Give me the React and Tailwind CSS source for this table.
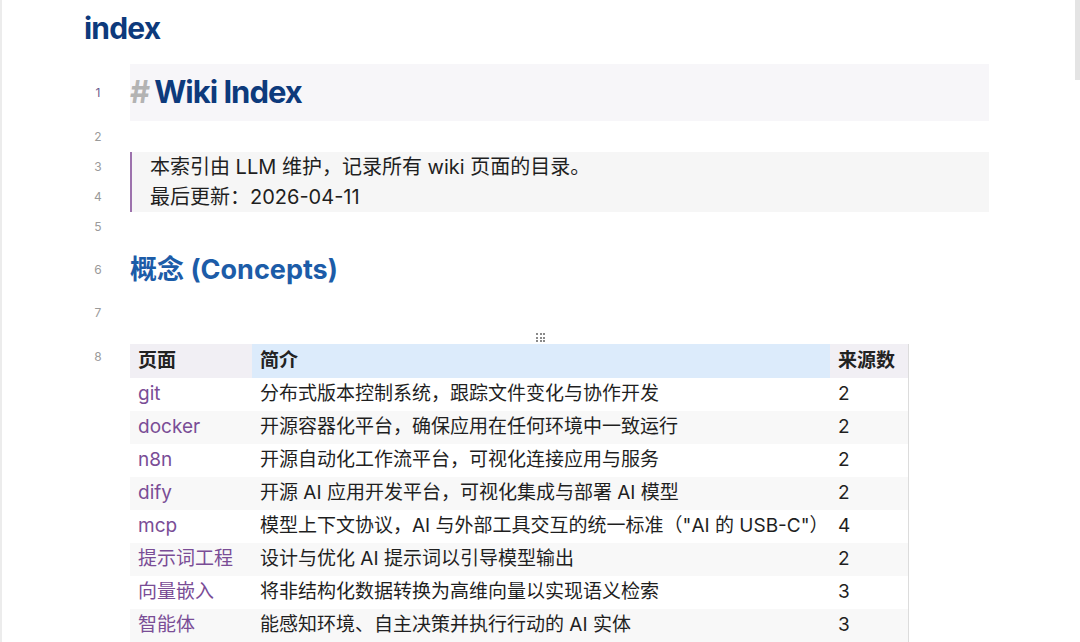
import React from 'react'

const rows = [
  ['git', '分布式版本控制系统，跟踪文件变化与协作开发', '2'],
  ['docker', '开源容器化平台，确保应用在任何环境中一致运行', '2'],
  ['n8n', '开源自动化工作流平台，可视化连接应用与服务', '2'],
  ['dify', '开源 AI 应用开发平台，可视化集成与部署 AI 模型', '2'],
  ['mcp', '模型上下文协议，AI 与外部工具交互的统一标准（"AI 的 USB-C"）', '4'],
  ['提示词工程', '设计与优化 AI 提示词以引导模型输出', '2'],
  ['向量嵌入', '将非结构化数据转换为高维向量以实现语义检索', '3'],
  ['智能体', '能感知环境、自主决策并执行行动的 AI 实体', '3'],
]

function LineNo({ n, active }) {
  return (
    <div
      className={`ml-[83px] w-[26px] shrink-0 text-center text-[12px] ${active ? 'text-[#6b5a8c]' : 'text-[#9a9a9a]'}`}
    >
      {n}
    </div>
  )
}

function DragHandle() {
  return (
    <div className="grid grid-cols-3 gap-[1.5px] w-[9px]">
      {Array.from({ length: 9 }).map((_, i) => (
        <span key={i} className="block w-[2px] h-[2px] bg-[#8a8a8a]" />
      ))}
    </div>
  )
}

export default function App() {
  return (
    <div
      className="relative w-[1080px] h-[642px] overflow-hidden bg-white border-l-2 border-[#ececec] text-[#222]"
      style={{ fontFamily: '"Inter", "Noto Sans CJK SC", sans-serif' }}
    >
      {/* scrollbar thumb */}
      <div className="absolute right-0 top-0 w-[5px] h-[80px] bg-[#e4e4e4]" />

      <div className="pl-[82px] pt-[9px] h-[64px]">
        <h1 className="text-[30px] font-bold leading-[38px] tracking-[-0.8px] text-[#0d3a7c]">index</h1>
      </div>

      {/* line 1 */}
      <div className="flex items-center h-[57px]">
        <LineNo n="1" active />
        <div className="ml-[19px] w-[859px] h-full flex items-center bg-[#f7f6f9]">
          <span className="text-[31px] font-bold tracking-[-1px] text-[#b3b3b3] mr-[5px]">#</span>
          <span className="text-[31px] font-bold tracking-[-1px] text-[#0d3a7c]">Wiki Index</span>
        </div>
      </div>

      {/* line 2 */}
      <div className="flex items-center h-[31px]">
        <LineNo n="2" />
      </div>

      {/* lines 3-4 blockquote */}
      <div className="flex">
        <div className="flex flex-col">
          <div className="flex items-center h-[30px]"><LineNo n="3" /></div>
          <div className="flex items-center h-[30px]"><LineNo n="4" /></div>
        </div>
        <div className="ml-[19px] w-[859px] bg-[#f6f6f6] border-l-2 border-[#9d72ad] pl-[18px] text-[20px] leading-[30px] text-[#1f1f1f]">
          <div>本索引由 LLM 维护，记录所有 wiki 页面的目录。</div>
          <div>最后更新：2026-04-11</div>
        </div>
      </div>

      {/* line 5 */}
      <div className="flex items-center h-[30px]">
        <LineNo n="5" />
      </div>

      {/* line 6 */}
      <div className="flex items-center h-[56px]">
        <LineNo n="6" />
        <h2 className="ml-[19px] text-[27px] font-bold text-[#1c5ca8]">概念 (Concepts)</h2>
      </div>

      {/* line 7 */}
      <div className="flex items-center h-[30px]">
        <LineNo n="7" />
      </div>

      {/* line 8 table */}
      <div className="flex">
        <div className="pt-[16px]">
          <div className="flex items-center h-[26px]"><LineNo n="8" /></div>
        </div>
        <div className="ml-[19px] relative pt-[16px]">
          <div className="absolute left-[406px] top-[5px]">
            <DragHandle />
          </div>
          <table className="border-collapse text-[19px] border-r border-[#dcdcdc]">
            <thead>
              <tr className="h-[34px] text-left">
                <th className="w-[122px] pl-[8px] bg-[#f1eff4] font-bold">页面</th>
                <th className="w-[578px] pl-[8px] bg-[#dcebfb] font-bold">简介</th>
                <th className="w-[78px] pl-[8px] bg-[#f1eff4] font-bold">来源数</th>
              </tr>
            </thead>
            <tbody>
              {rows.map(([page, desc, n], i) => (
                <tr key={page} className={`h-[33px] ${i % 2 === 1 ? 'bg-[#f8f8f8]' : 'bg-white'}`}>
                  <td className="pl-[8px] text-[#7a4d96]">{page}</td>
                  <td className="pl-[8px] text-[#1f1f1f]">{desc}</td>
                  <td className="pl-[8px] text-[#1f1f1f]">{n}</td>
                </tr>
              ))}
            </tbody>
          </table>
        </div>
      </div>
    </div>
  )
}
